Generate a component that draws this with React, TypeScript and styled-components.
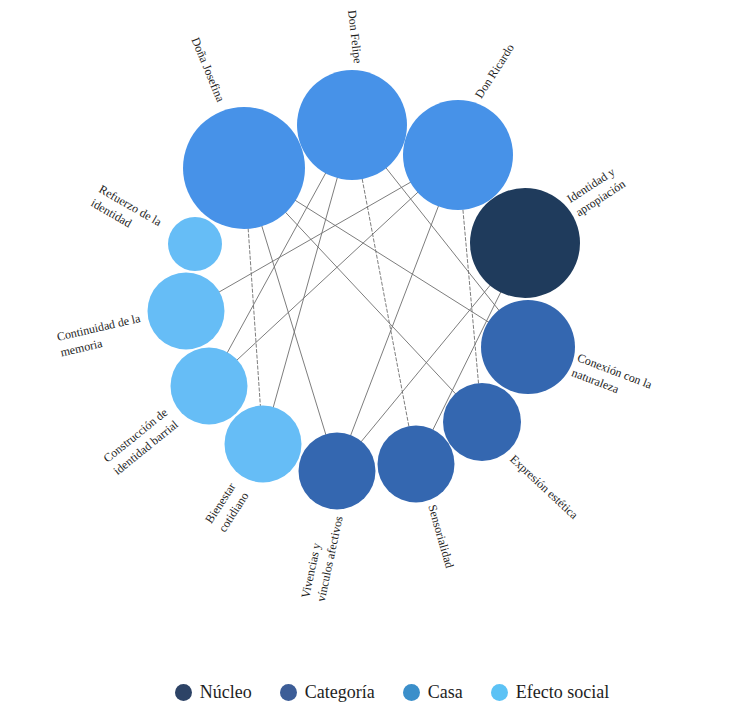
import styled, { createGlobalStyle } from 'styled-components'

type NodeKind = 'nucleo' | 'categoria' | 'casa' | 'efecto'

const fills: Record<NodeKind, string> = {
    nucleo: '#1f3b5c',
    categoria: '#3467b0',
    casa: '#4792e8',
    efecto: '#66bdf6',
}

const legendFills: Record<NodeKind, string> = {
    nucleo: '#2d4366',
    categoria: '#3c5d97',
    casa: '#3b8fca',
    efecto: '#5cc2f5',
}

const nodes = {
    josefina: { x: 244, y: 168, r: 61, kind: 'casa' },
    felipe: { x: 352, y: 125, r: 55, kind: 'casa' },
    ricardo: { x: 458, y: 155, r: 55, kind: 'casa' },
    identidad: { x: 525, y: 243, r: 55, kind: 'nucleo' },
    conexion: { x: 528, y: 347, r: 47, kind: 'categoria' },
    expresion: { x: 482, y: 422, r: 39, kind: 'categoria' },
    sensorialidad: { x: 416, y: 464, r: 38.5, kind: 'categoria' },
    vivencias: { x: 337, y: 471, r: 38.5, kind: 'categoria' },
    bienestar: { x: 263, y: 444, r: 38.5, kind: 'efecto' },
    construccion: { x: 209, y: 386, r: 38.5, kind: 'efecto' },
    continuidad: { x: 186, y: 311, r: 38.5, kind: 'efecto' },
    refuerzo: { x: 195, y: 244, r: 27, kind: 'efecto' },
} as const

type NodeId = keyof typeof nodes

const edges: [NodeId, NodeId, boolean?][] = [
    ['josefina', 'bienestar', true],
    ['josefina', 'vivencias'],
    ['josefina', 'expresion'],
    ['josefina', 'conexion'],
    ['felipe', 'construccion'],
    ['felipe', 'bienestar'],
    ['felipe', 'sensorialidad', true],
    ['felipe', 'conexion'],
    ['ricardo', 'continuidad'],
    ['ricardo', 'construccion'],
    ['ricardo', 'vivencias'],
    ['ricardo', 'expresion', true],
    ['identidad', 'vivencias'],
    ['identidad', 'sensorialidad'],
]

const labels = [
    { lines: ['Doña Josefina'], x: 195, y: 38, a: 67.5 },
    { lines: ['Don Felipe'], x: 352, y: 10, a: 83.5 },
    { lines: ['Don Ricardo'], x: 478, y: 97, a: -57.5 },
    { lines: ['Identidad y', 'apropiación'], x: 568, y: 200, a: -33 },
    { lines: ['Refuerzo de la', 'identidad'], x: 100, y: 188, a: 30 },
    { lines: ['Continuidad de la', 'memoria'], x: 57, y: 337, a: -13 },
    { lines: ['Construcción de', 'identidad barrial'], x: 105, y: 460, a: -39 },
    { lines: ['Bienestar', 'cotidiano'], x: 208, y: 522, a: -57 },
    { lines: ['Vivencias y', 'vínculos afectivos'], x: 305, y: 598, a: -78 },
    { lines: ['Sensorialidad'], x: 432, y: 505, a: 74 },
    { lines: ['Expresión estética'], x: 512, y: 457, a: 43 },
    { lines: ['Conexión con la', 'naturaleza'], x: 578, y: 357, a: 21 },
]

const legend: { kind: NodeKind; text: string }[] = [
    { kind: 'nucleo', text: 'Núcleo' },
    { kind: 'categoria', text: 'Categoría' },
    { kind: 'casa', text: 'Casa' },
    { kind: 'efecto', text: 'Efecto social' },
]

export default function App() {
    return (
        <>
            <GlobalStyle />
            <Page>
                <Chart viewBox="0 0 754 672" width={754} height={672}>
                    {edges.map(([from, to, dashed], i) => (
                        <Edge
                            key={i}
                            x1={nodes[from].x}
                            y1={nodes[from].y}
                            x2={nodes[to].x}
                            y2={nodes[to].y}
                            $dashed={!!dashed}
                        />
                    ))}
                    {Object.entries(nodes).map(([id, n]) => (
                        <Node key={id} cx={n.x} cy={n.y} r={n.r} $fill={fills[n.kind]} />
                    ))}
                    {labels.map((l) => (
                        <Label
                            key={l.lines[0]}
                            transform={`translate(${l.x} ${l.y}) rotate(${l.a})`}
                        >
                            {l.lines.map((line, i) => (
                                <tspan key={line} x={0} dy={i === 0 ? 0 : 16}>
                                    {line}
                                </tspan>
                            ))}
                        </Label>
                    ))}
                </Chart>
                <Legend>
                    {legend.map((item) => (
                        <LegendItem key={item.kind}>
                            <Swatch $color={legendFills[item.kind]} />
                            <LegendText>{item.text}</LegendText>
                        </LegendItem>
                    ))}
                </Legend>
            </Page>
        </>
    )
}

const GlobalStyle = createGlobalStyle`
    body {
        margin: 0;
        background: #ffffff;
    }
`
const Page = styled.div`
    width: 754px;
    height: 716px;
    display: flex;
    flex-direction: column;
    background: #ffffff;
    overflow: hidden;
`
const Chart = styled.svg`
    display: block;
    flex: none;
`
const Edge = styled.line<{ $dashed: boolean }>`
    stroke: #6e6e6e;
    stroke-width: 0.9;
    stroke-dasharray: ${(p) => (p.$dashed ? '4 1.5' : 'none')};
`
const Node = styled.circle<{ $fill: string }>`
    fill: ${(p) => p.$fill};
`
const Label = styled.text`
    font-family: 'Liberation Serif', 'DejaVu Serif', serif;
    font-size: 12px;
    fill: #1e1e1e;
    dominant-baseline: central;
`
const Legend = styled.div`
    height: 40px;
    display: flex;
    align-items: center;
    justify-content: center;
    gap: 28px;
    padding-left: 30px;
`
const LegendItem = styled.div`
    display: flex;
    align-items: center;
    gap: 8px;
`
const Swatch = styled.span<{ $color: string }>`
    width: 17px;
    height: 17px;
    border-radius: 50%;
    background: ${(p) => p.$color};
`
const LegendText = styled.span`
    font-family: 'Liberation Serif', 'DejaVu Serif', serif;
    font-size: 18px;
    color: #1e1e1e;
`
